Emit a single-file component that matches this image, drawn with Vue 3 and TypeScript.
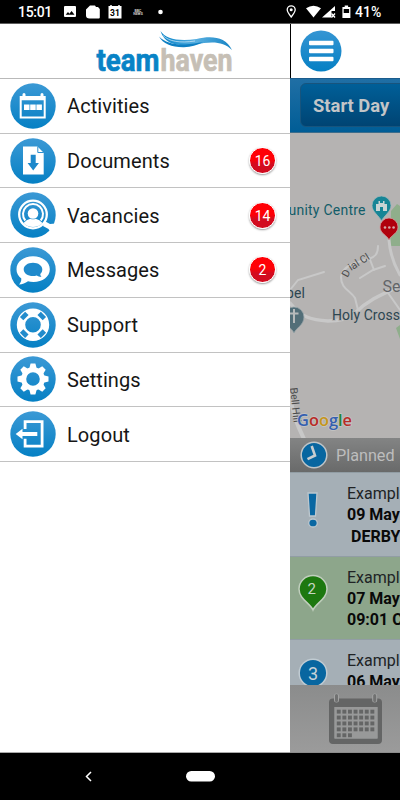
<script setup lang="ts">
interface MenuItem {
  id: string
  label: string
  badge?: number
}

interface Visit {
  kind: 'alert' | 'pin' | 'dot'
  marker: string
  title: string
  date: string
  detail: string
}

const menu: MenuItem[] = [
  { id: 'activities', label: 'Activities' },
  { id: 'documents', label: 'Documents', badge: 16 },
  { id: 'vacancies', label: 'Vacancies', badge: 14 },
  { id: 'messages', label: 'Messages', badge: 2 },
  { id: 'support', label: 'Support' },
  { id: 'settings', label: 'Settings' },
  { id: 'logout', label: 'Logout' },
]

const visits: Visit[] = [
  { kind: 'alert', marker: '!', title: 'Example', date: '09 May', detail: '\u00a0DERBY' },
  { kind: 'pin', marker: '2', title: 'Example', date: '07 May', detail: '09:01 C' },
  { kind: 'dot', marker: '3', title: 'Example', date: '06 May', detail: '' },
]

const teeth = [0, 45, 90, 135, 180, 225, 270, 315]
const diagonals = [45, 135, 225, 315]
const days = Array.from({ length: 31 }, (_, i) => ({ x: 46.8 + (i % 7) * 5.6, y: 24.7 + Math.floor(i / 7) * 5.9 }))
</script>

<template>
  <div class="phone">
    <header class="status">
      <span class="time">15:01</span>
      <svg class="status-icons" width="110" height="23" viewBox="60 0 110 23">
        <path d="M65 6h10q1 0 1 1v9q0 1-1 1H65q-1 0-1-1V7q0-1 1-1zm.7 8.800h8.800l-2.900-3.800-2.200 2.700-1.400-1.600z" fill="#fff" fill-rule="evenodd" />
        <path d="M90 5.500h5l1 1.500h2l1.800 2v8.500q0 1-1 1h-9.300q-3.500 0-3.500-3V9.500z" fill="#fff" />
        <path d="M108.500 6h13v12.500h-13z" fill="#fff" />
        <path d="M111 5v2M119 5v2" stroke="#fff" stroke-width="1.500" />
        <text x="115" y="16" class="day">31</text>
        <text x="138" y="11.500" class="bbc">BBC</text>
        <text x="138" y="15" class="bbc">NEWS</text>
        <circle cx="160.500" cy="12" r="2.300" fill="#fff" />
      </svg>
      <svg class="status-icons signal" width="70" height="23" viewBox="284 0 70 23">
        <path d="M291.200 17c-2.700-3.400-4-5.400-4-7.200a4 4 0 0 1 8 0c0 1.800-1.300 3.800-4 7.200z" fill="none" stroke="#fff" stroke-width="1.300" />
        <circle cx="291.200" cy="9.800" r="1.500" fill="#fff" />
        <path d="M306 8.200q7.500-5 15 0l-7.500 9.300z" fill="#fff" />
        <path d="M322 17.500 335 6v5h-3.500v6.500z" fill="#fff" />
        <path d="m331.500 13.500 3.500 4m0-4-3.500 4" stroke="#fff" stroke-width="1.300" />
        <path d="M344.700 5.500h3.400V7h2.300v11h-8V7h2.300zm-1 3.500v4h5.400V9z" fill="#fff" fill-rule="evenodd" />
      </svg>
      <span class="percent">41%</span>
    </header>

    <div class="app">
      <aside class="drawer">
        <div class="brand">
          <svg width="146" height="50" viewBox="90 26 146 50">
            <defs>
              <linearGradient id="swoosh"><stop offset="0" stop-color="#0784c9" /><stop offset=".5" stop-color="#58afe0" /><stop offset="1" stop-color="#1583c4" /></linearGradient>
            </defs>
            <path d="M160.500 31c5 8 18 10.500 36 8 15-3.500 29-2.500 35.500 11-7-7.500-17-8.500-28-7-11 2-20 3-28 1.500-7-1.300-13-5.500-15.500-13.500z" fill="url(#swoosh)" />
            <path d="M159 36.500c6 6 15 8.500 26 8 7-.4 12-1.600 18-2.200-6 2.700-12 4.700-19 4.900-12 .2-21-3.200-25-10.700z" fill="#0e7fc2" />
            <path d="M163 35.500c6 6 17 7.800 32 5.500" fill="none" stroke="#d9edf8" stroke-width=".7" />
            <text x="96.500" y="70.500" class="logo blue" textLength="63" lengthAdjust="spacingAndGlyphs">team</text>
            <text x="160.500" y="70.500" class="logo grey" textLength="72" lengthAdjust="spacingAndGlyphs">haven</text>
          </svg>
        </div>
        <nav class="menu">
          <div v-for="item in menu" :key="item.id" class="item">
            <svg class="icon" width="46" height="46" viewBox="0 0 46 46">
              <defs>
                <linearGradient :id="'g-' + item.id" x2="0" y2="1"><stop offset="0" stop-color="#3b99d5" /><stop offset="1" stop-color="#0580c4" /></linearGradient>
              </defs>
              <circle cx="23" cy="23" r="22.700" :fill="`url(#g-${item.id})`" />
              <g v-if="item.id === 'activities'" fill="#fff">
                <path d="M9.700 13h26v22.500h-26zm2 4.200v16.300h22V17.200z" fill-rule="evenodd" />
                <path d="M12.500 11.500q0-1.500 1.500-1.500t1.500 1.500V15h-3zM30.500 11.500q0-1.500 1.500-1.500t1.500 1.500V15h-3z" />
                <path d="M14 21.500h5.500V27H14zM20.200 21.500h5.500V27h-5.500zM26.400 21.500h5.500V27h-5.500z" />
              </g>
              <g v-else-if="item.id === 'documents'">
                <path d="M13 8.500h14.500l6.200 6.200v21.800H13z" fill="#fff" />
                <path d="M27.800 8.500v6h6" fill="none" stroke="#2b8fcf" stroke-width="1" />
                <path d="M20.700 16.700h5v8.200h3.200l-5.700 7.700-5.600-7.700h3.100z" fill="#1c88cb" />
              </g>
              <g v-else-if="item.id === 'vacancies'">
                <circle cx="23" cy="22.500" r="13.800" fill="none" stroke="#fff" stroke-width="2.300" />
                <path d="M15.300 28.500a10 10 0 1 1 15.400 0" fill="none" stroke="#fff" stroke-width="2" />
                <circle cx="23" cy="21.500" r="5.300" fill="#fff" />
                <path d="M13.500 31q3-3.300 6.800-4.300 2.700 1.300 5.400 0 3.800 1 6.800 4.300-3.500 4-9.500 4t-9.500-4z" fill="#fff" />
                <path d="m34.500 29 5.500 3 5.500-.5-1.500 4.300-3.500 4.200-2-3-5.500-3z" fill="#fff" />
              </g>
              <g v-else-if="item.id === 'messages'">
                <path d="M23 9.300c9.500 0 16.800 5.500 16.800 13S32.500 35 23.500 35c-2.200 0-4-.2-5.500-.7-2.700 2-5.500 3-9 3.300 1.600-1.800 2.500-3.500 2.300-6.100C8 29 6.500 26 6.500 22.300c0-7.500 7-13 16.500-13z" fill="#fff" />
                <path d="M23 15.800c5.300 0 9.300 2.900 9.300 6.700 0 1.700-.7 3.200-2 4.400 0 1.200.4 2 1.200 3-2 0-3.500-.5-4.900-1.400-1.100.4-2.400.6-3.600.6-5.300 0-9.300-2.900-9.300-6.600 0-3.800 4-6.700 9.300-6.700z" fill="#1f8acc" />
              </g>
              <g v-else-if="item.id === 'support'">
                <circle cx="23" cy="22.800" r="12" fill="none" stroke="#fff" stroke-width="8.400" />
                <rect v-for="a in diagonals" :key="a" x="19.300" y="8" width="7.400" height="4.800" fill="#218bcc" :transform="`rotate(${a} 23 22.800)`" />
              </g>
              <g v-else-if="item.id === 'settings'">
                <path v-for="a in teeth" :key="a" d="M20.600 7.500h4.800l1.600 6h-8z" fill="#fff" :transform="`rotate(${a} 23 23)`" />
                <circle cx="23" cy="23" r="9.300" fill="none" stroke="#fff" stroke-width="5" />
              </g>
              <g v-else fill="#fff">
                <path d="M13.700 9.300h19.800v27.200H13.700v-8.700h2.800v5.900h14.200V12H16.500v6h-2.800z" />
                <path d="m5.700 23 6.800-5.200v3.300h14.800v3.800H12.500v3.300z" />
              </g>
            </svg>
            <span class="label">{{ item.label }}</span>
            <span v-if="item.badge" class="badge">{{ item.badge }}</span>
          </div>
        </nav>
      </aside>

      <main class="page">
        <div class="topbar">
          <svg width="42" height="42" viewBox="0 0 42 42">
            <defs><linearGradient id="burger" x2="0" y2="1"><stop offset="0" stop-color="#3595d3" /><stop offset="1" stop-color="#0580c4" /></linearGradient></defs>
            <circle cx="21" cy="21" r="20.500" fill="url(#burger)" />
            <g fill="#fff"><rect x="9" y="10.700" width="24.500" height="4.600" rx="1" /><rect x="9" y="18.700" width="24.500" height="4.600" rx="1" /><rect x="9" y="26.700" width="24.500" height="4.600" rx="1" /></g>
          </svg>
        </div>
        <div class="daybar"><button class="start">Start Day</button></div>
        <svg class="map" width="110" height="305" viewBox="290 133 110 305">
          <rect x="290" y="133" width="110" height="305" fill="#b5b3b2" />
          <path d="M391 211l6-7 3 2v40h-10zM396 328l4-3v14z" fill="#8fae8b" />
          <g fill="none" stroke="#c8c8c8" stroke-linecap="round">
            <path d="M389 240c1 14 4 23 11 35" stroke-width="3" />
            <path d="M290 303c12 15 22 17 38 18 12 0 20-2 27-8 12-12 23-17 45-27" stroke-width="3.500" />
            <path d="M358 310l-3-12c-5-8-14-9-14-21 1-11 15-15 28-18 6-2 9-5 9-13M369 257l5 13M360 278l13-8 12-4M290 290l8-10 26-8M386 290l14 20" stroke-width="2" />
            <path d="M284 370c4 15 5 27 9 40 2 10 6 19 13 33" stroke-width="4" />
          </g>
          <text x="288.500" y="215" class="place teal" textLength="77">unity Centre</text>
          <text x="286" y="298" class="place" textLength="19">pel</text>
          <text x="332" y="320" class="place" textLength="68">Holy Cross</text>
          <text x="382.500" y="292" class="suburb">Se</text>
          <text class="road" transform="translate(347.500 278) rotate(-62)" x="0" y="0">D</text>
          <text class="road" transform="translate(351 271) rotate(-32)" x="0" y="0">ial Cl</text>
          <text class="road" transform="translate(290 388) rotate(84)" x="0" y="0">Bell Hill</text>
          <path d="M381.500 221c-2-5-9.500-9-9.500-15.500a9.500 9.500 0 0 1 19 0c0 6.500-7.500 10.500-9.500 15.500z" fill="#168596" stroke="#a2b7b9" stroke-width=".8" />
          <path d="M376 211v-7h2.500v-3h1.500v2h3v-2h1.500v3h2.500v7h-4v-4h-3v4z" fill="#c8d4d4" />
          <path d="M389 240c-2-5-9-6.500-9-13a9 9 0 0 1 18 0c0 6.500-7 8-9 13z" fill="#b0000c" stroke="#cf989a" stroke-width=".8" />
          <g fill="#d5a7a8"><circle cx="385" cy="227.500" r="1.300" /><circle cx="389.300" cy="227.500" r="1.300" /><circle cx="393.600" cy="227.500" r="1.300" /></g>
          <path d="M294 333c-2-5-10-8-10-16a10 10 0 0 1 20 0c0 8-8 11-10 16z" fill="#526e78" stroke="#98a5a8" stroke-width=".8" />
          <path d="M294 309v14m-4.500-9.500h9" stroke="#b6babb" stroke-width="2" />
          <text x="297" y="426" class="google" textLength="55" lengthAdjust="spacingAndGlyphs"><tspan fill="#345fb0">G</tspan><tspan fill="#b82c27">o</tspan><tspan fill="#c6951a">o</tspan><tspan fill="#345fb0">g</tspan><tspan fill="#248338">l</tspan><tspan fill="#b82c27">e</tspan></text>
        </svg>
        <div class="planned">
          <svg width="30" height="30" viewBox="0 0 30 30">
            <circle cx="15" cy="15" r="12.800" fill="#0866a0" stroke="#bfc5c8" stroke-width="1.500" />
            <path d="m12.700 6 3.300 9.500-7.500 3.700" fill="none" stroke="#c8cdd0" stroke-width="2.600" />
          </svg>
          <span>Planned</span>
        </div>
        <section class="visits">
          <article v-for="v in visits" :key="v.marker" class="visit" :class="v.kind">
            <svg v-if="v.kind === 'alert'" class="marker" width="34" height="50" viewBox="296 486 34 50">
              <path d="M308 493h9l-1.500 23h-6zM308.700 523a4.300 4 0 1 0 8.600 0a4.300 4 0 1 0-8.600 0z" fill="#0967a2" stroke="#bcc7ce" stroke-width="1.300" />
            </svg>
            <svg v-else-if="v.kind === 'pin'" class="marker" width="34" height="50" viewBox="296 570 34 50">
              <path d="M313 610c-3-7-14-11-14-21a14 13.500 0 0 1 28 0c0 10-11 14-14 21z" fill="#1d780f" stroke="#c0cebd" stroke-width="1.500" />
              <text x="311.800" y="594" class="num">{{ v.marker }}</text>
            </svg>
            <svg v-else class="marker" width="34" height="50" viewBox="296 654 34 50">
              <circle cx="313" cy="674" r="13.800" fill="#0866a0" stroke="#c0cbd2" stroke-width="1.500" />
              <text x="313" y="681" class="num big">{{ v.marker }}</text>
            </svg>
            <div class="copy">
              <p>{{ v.title }}</p>
              <strong>{{ v.date }}</strong>
              <strong>{{ v.detail }}</strong>
            </div>
          </article>
        </section>
        <footer class="tab">
          <svg width="110" height="67" viewBox="0 0 110 67">
            <path d="M43 13.500h45q4 0 4 4V55q0 4-4 4H43q-4 0-4-4V17.500q0-4 4-4zm1.500 8.500v31.500h43V22z" fill="#646565" fill-rule="evenodd" />
            <path d="M44.500 22h43v31.500h-43z" fill="#989999" />
            <path d="M46.500 11v4M84.700 11v4" stroke="#a2a3a3" stroke-width="5" stroke-linecap="round" />
            <path d="M46.500 10.500v5M84.700 10.500v5" stroke="#707171" stroke-width="3" stroke-linecap="round" />
            <rect v-for="(d, i) in days" :key="i" :x="d.x" :y="d.y" width="3.900" height="3.900" fill="#646565" />
          </svg>
        </footer>
      </main>
    </div>

    <footer class="system">
      <svg width="400" height="47" viewBox="0 0 400 47">
        <path d="m91 19-4.500 4.500L91 28" fill="none" stroke="#fff" stroke-width="1.500" />
        <rect x="186" y="18" width="29" height="10.500" rx="5.250" fill="#fff" />
      </svg>
    </footer>
  </div>
</template>

<style>
body {
  margin: 0;
  background: #000;
}
</style>

<style scoped>
.phone {
  width: 400px;
  height: 800px;
  display: flex;
  flex-direction: column;
  overflow: hidden;
  background: #000;
  font-family: Roboto, "Liberation Sans", sans-serif;
}
.status {
  height: 23px;
  border-bottom: 1px solid #5c5c5c;
  display: flex;
  align-items: center;
  color: #fff;
}
.time {
  box-sizing: border-box;
  width: 60px;
  padding: 1px 0 0 18px;
  font-size: 14px;
  font-weight: 500;
  line-height: 20px;
  letter-spacing: -0.3px;
}
.signal {
  margin-left: 114px;
}
.percent {
  padding: 1px 0 0 1px;
  font-size: 14px;
  font-weight: 500;
  line-height: 20px;
}
.day {
  font: 700 8.500px Roboto, sans-serif;
  text-anchor: middle;
}
.bbc {
  font: 700 3.500px Roboto, sans-serif;
  text-anchor: middle;
  fill: #ccc;
}
.app {
  height: 729px;
  display: flex;
}
.drawer {
  width: 290px;
  height: 728px;
  border-bottom: 1px solid #aaa;
  background: #fff;
}
.brand {
  box-sizing: border-box;
  height: 55px;
  padding: 2px 0 0 90px;
  border-bottom: 1px solid #b9b9b9;
}
.brand svg {
  display: block;
  overflow: visible;
}
.logo {
  font: 700 32px Roboto, sans-serif;
  stroke-width: 0.7px;
}
.blue {
  fill: #0883c6;
  stroke: #0883c6;
}
.grey {
  fill: #c6bfb5;
  stroke: #c6bfb5;
}
.menu {
  height: 383px;
  display: grid;
  grid-template-rows: repeat(7, 1fr);
}
.item {
  display: flex;
  align-items: center;
  padding: 0 14px 0 10px;
  border-bottom: 1px solid #c2c2c2;
}
.icon {
  flex: none;
}
.label {
  flex: 1;
  padding: 1px 0 0 11px;
  font-size: 20px;
  line-height: 26px;
  letter-spacing: 0.08px;
  color: #161616;
}
.badge {
  width: 25px;
  height: 25px;
  border: 1.500px solid #fff;
  border-radius: 50%;
  background: linear-gradient(#ff0006 45%, #d20c20 65%);
  box-shadow: 0 1px 2px #999;
  color: #fff;
  font-size: 14px;
  line-height: 26px;
  text-align: center;
}
.page {
  width: 110px;
  overflow: hidden;
  background: #8c8c8c;
}
.topbar {
  box-sizing: border-box;
  height: 54px;
  padding: 6px 0 0 9px;
  border-left: 1px solid #000;
  background: #fff;
}
.topbar svg {
  display: block;
}
.daybar {
  box-sizing: border-box;
  height: 55px;
  padding: 4px 0 0 10px;
  border-top: 1px solid #1b5c8d;
  border-bottom: 1px solid #3b6d8c;
  background: linear-gradient(#206fa5, #005d96);
}
.start {
  box-sizing: border-box;
  width: 120px;
  height: 44px;
  padding: 0 0 0 12px;
  border: 1px solid #17547d;
  border-radius: 6px;
  background: linear-gradient(#005f98, #004473);
  color: #c3c5c7;
  font: 700 18.400px Roboto, sans-serif;
  text-align: left;
  white-space: nowrap;
}
.map {
  display: block;
}
.place {
  font: 400 14px Roboto, sans-serif;
  fill: #2d4651;
  stroke: #b5b3b2;
  stroke-width: 2px;
  paint-order: stroke;
}
.teal {
  fill: #125d69;
}
.suburb {
  font: 400 16px Roboto, sans-serif;
  fill: #626568;
}
.road {
  font: 400 10.500px Roboto, sans-serif;
  fill: #4c4c4c;
}
.google {
  font: 600 17px "Open Sans", sans-serif;
  stroke: #c5c5c5;
  stroke-width: 1.500px;
  paint-order: stroke;
}
.planned {
  height: 34px;
  display: flex;
  align-items: center;
  gap: 7px;
  padding-left: 9px;
  background: linear-gradient(#838484, #696a6a);
  color: #bdbdbd;
  font-size: 16.200px;
}
.visits {
  height: 213px;
  overflow: hidden;
}
.visit {
  box-sizing: border-box;
  height: 83.500px;
  display: flex;
  padding: 10px 0 0 6px;
  border-top: 1px solid #919da4;
  background: #a5afb6;
}
.visit.pin {
  background: #8da68b;
}
.marker {
  flex: none;
  margin-top: 3px;
}
.copy {
  display: flex;
  flex-direction: column;
  padding-left: 17px;
  font-size: 16px;
  line-height: 21.300px;
  white-space: nowrap;
  color: #090909;
}
.copy p {
  margin: 0;
  color: #202325;
}
.copy strong {
  font-weight: 700;
}
.num {
  font: 400 15px Roboto, sans-serif;
  fill: #c6d6c3;
  text-anchor: middle;
}
.big {
  font-size: 18px;
  fill: #c9d2d8;
}
.tab {
  height: 67px;
  background: linear-gradient(#8b8c8c, #9b9b9b);
}
.tab svg {
  display: block;
}
.system {
  height: 47px;
}
.system svg {
  display: block;
}
</style>
